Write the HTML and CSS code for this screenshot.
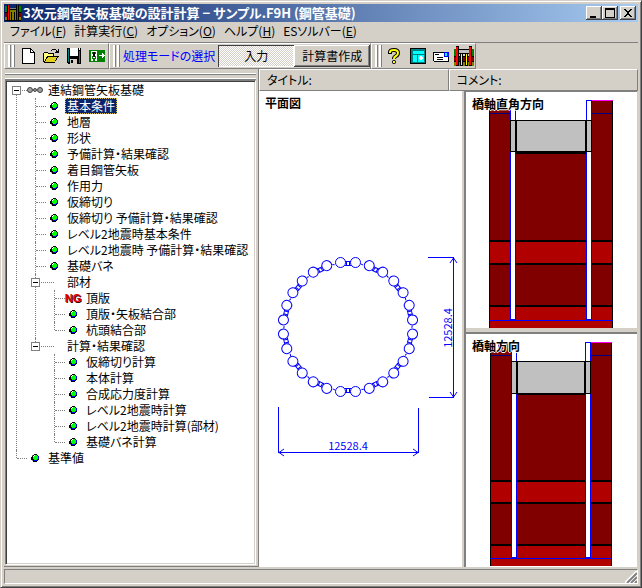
FILE: index.html
```html
<!DOCTYPE html>
<html lang="ja">
<head>
<meta charset="utf-8">
<title>3次元鋼管矢板基礎の設計計算</title>
<link rel="stylesheet" href="styles.css">
</head>
<body>
<svg class="defs" aria-hidden="true">
  <defs>
    <g id="ball" shape-rendering="crispEdges">
      <path fill="#000" d="M3 0h3v1h1v1h1v4h-1v1h-1v1h-4v-1h-1v-1h-1v-3h1v-2h2z"/>
      <path fill="#00f" d="M3 6h3v-1h1v-3h1v3h-1v1h-1v1h-3z"/>
      <path fill="#0f0" d="M3 1h3v1h1v3h-1v1h-3v-1h-1v-3h1z"/>
      <path fill="#fff" d="M2 2h1v-1h1v1h-1v1h-1z"/>
      <path fill="#808080" d="M1 1h1v1h-1zM1 6h1v1h-1z"/>
    </g>
  </defs>
</svg>
<div class="window">
  <header class="titlebar">
    <svg class="title-icon" viewBox="0 0 16 16" shape-rendering="crispEdges" aria-hidden="true">
      <path fill="#008000" d="M0 1h2v6h-2zM14 1h2v6h-2z"/><path fill="#800000" d="M0 8h16v4h-16z"/><path fill="#808000" d="M0 12h16v3h-16zM4 5h8v10h-8z"/>
      <path d="M2 0h3v16h-3zM11 0h3v16h-3zM5 4h6v1h-6zM6 7h1v8h-1zM9 7h1v8h-1zM0 7h2v1h-2zM14 7h2v1h-2zM0 15h16v1h-16z"/>
      <path fill="#f00" d="M3 0h1v15h-1zM12 0h1v15h-1z"/><path fill="#808080" d="M5 3h6v1h-6z"/>
    </svg>
    <h1>3次元鋼管矢板基礎の設計計算 − サンプル.F9H (鋼管基礎)</h1>
    <button class="caption" aria-label="最小化"><svg viewBox="0 0 12 10"><path d="M2 8h6v2h-6z"/></svg></button>
    <button class="caption" aria-label="最大化"><svg viewBox="0 0 12 10"><path fill-rule="evenodd" d="M1 0h10v10h-10zM2 2v7h8v-7z"/></svg></button>
    <button class="caption close" aria-label="閉じる"><svg viewBox="0 0 12 10"><path d="M2 1h2v1h1v1h2v-1h1v-1h2v1h-1v1h-1v1h-1v2h1v1h1v1h1v1h-2v-1h-1v-1h-2v1h-1v1h-2v-1h1v-1h1v-1h1v-2h-1v-1h-1v-1h-1z"/></svg></button>
  </header>

  <nav class="menu">
    <button>ファイル(<u>F</u>)</button>
    <button>計算実行(<u>C</u>)</button>
    <button>オプション(<u>O</u>)</button>
    <button>ヘルプ(<u>H</u>)</button>
    <button>ESソルバー(<u>E</u>)</button>
  </nav>

  <div class="toolbars">
    <div class="band">
      <span class="grip"></span>
      <button class="tool" aria-label="新規"><svg viewBox="0 0 16 16" shape-rendering="crispEdges"><path d="M2 0h9v1h1v1h1v1h1v1h1v12h-13z"/><path fill="#fff" d="M3 1h7v4h4v10h-11z"/><path fill="#fff" d="M11 2h1v1h1v1h-2z"/></svg></button>
      <button class="tool" aria-label="開く"><svg viewBox="0 0 16 16" shape-rendering="crispEdges"><path d="M0 5h1v-1h4v1h6v3h5v1h-1v1h-1v2h-1v1h-1v2h-11v-1h-1zM9 1h4v1h-4zM8 2h1v1h-1zM13 2h1v1h1v-2h1v4h-4v-1h1v-1h0z"/><path fill="#ffff80" d="M1 5h4v1h5v2h-6v1h-1v2h-1v2h-1z"/><path fill="#e0d020" d="M5 9h9v1h-1v2h-1v2h-10v-1h1v-2h1v-1h1z"/></svg></button>
      <button class="tool" aria-label="保存"><svg viewBox="0 0 16 16" shape-rendering="crispEdges"><path d="M1 0h14v16h-13v-1h-1z"/><path fill="#008080" d="M2 1h1v13h-1zM13 3h1v12h-1z"/><path fill="#fff" d="M4 0h8v8h-8zM13 0h1v2h-1z"/><path fill="#d4d0c8" d="M4 11h7v5h-7z"/><path d="M5 12h2v3h-2z"/></svg></button>
      <button class="tool" aria-label="終了"><svg viewBox="0 0 16 16" shape-rendering="crispEdges"><path fill="#008000" d="M0 2h16v12h-16z"/><path fill="#fff" d="M2 3h6v10h-6z"/><path fill="#008000" d="M3 4h1v2h-1zM6 4h1v2h-1zM3 8h1v3h-1zM6 8h1v3h-1zM4 10h2v3h-2z"/><path d="M4 4h2v2h-2zM4 6h2v3h-2z"/><path fill="#fff" d="M10 7h3v-2h1v1h1v1h1v1h-1v1h-1v1h-1v-2h-3z"/></svg></button>
    </div>
    <div class="band">
      <span class="grip"></span>
      <span class="mode-label">処理モードの選択</span>
      <button class="mode pressed" aria-pressed="true">入力</button>
      <button class="mode" aria-pressed="false">計算書作成</button>
    </div>
    <div class="band">
      <span class="grip"></span>
      <button class="tool" aria-label="ヘルプ"><svg viewBox="0 0 16 16"><path fill="none" stroke="#000" stroke-width="4" d="M3 6v-2q0-2 4-2t4 3q0 2-2 3t-2 3"/><path fill="none" stroke="#ff0" stroke-width="2" d="M3 5v-1q0-2 4-2t4 3q0 2-2 3t-2 3"/><circle cx="7" cy="14" r="2"/><path fill="#ff0" d="M6 13h2v2h-2z"/></svg></button>
      <button class="tool" aria-label="画面"><svg viewBox="0 0 16 16" shape-rendering="crispEdges"><path d="M0 0h16v16h-16z"/><path fill="#008080" d="M1 1h14v14h-14z"/><path fill="#0ff" d="M3 3h11v3h-11zM3 7h4v7h-4zM8 7h6v7h-6z"/><path fill="#fff" d="M10 8h2v1h1v2h-1v1h-2v-1h-1v-2h1z"/></svg></button>
      <button class="tool" aria-label="メール"><svg viewBox="0 0 16 16" shape-rendering="crispEdges"><path d="M0 4h16v10h-15v-1h-1z"/><path fill="#fff" d="M1 5h14v8h-14z"/><path d="M2 6h4v1h-4zM4 9h6v1h-6zM4 11h6v1h-6z"/><path fill="#00f" d="M11 4h5v5h-5z"/><path fill="#0ff" d="M12 5h2v3h-2z"/></svg></button>
      <button class="tool" aria-label="基礎"><svg class="large" viewBox="0 0 20 20" shape-rendering="crispEdges">
        <path fill="#008000" d="M0 3h2v7h-2zM18 3h2v7h-2z"/><path fill="#800000" d="M0 11h20v4h-20z"/><path fill="#808000" d="M0 16h20v4h-20z"/>
        <path d="M0 10h20v1h-20zM0 15h20v1h-20zM2 0h3v20h-3zM15 0h3v20h-3zM5 3h10v1h-10zM5 7h10v1h-10zM6 8h3v12h-3zM11 8h3v12h-3z"/>
        <path fill="#c0c0c0" d="M5 4h10v3h-10z"/><path fill="#f00" d="M2 1h2v18h-2zM15 1h2v18h-2z"/><path fill="#ff0" d="M7 8h1v11h-1zM12 8h1v11h-1z"/>
      </svg></button>
    </div>
  </div>

  <main class="body">
    <aside class="side">
      <div class="side-grip"></div>
      <div class="tree-box">
        <ul class="tree">
          <li class="root">
            <div class="row"><button class="exp" aria-label="折りたたむ"></button><span class="icon"><svg viewBox="0 0 16 8" class="chain"><circle cx="3" cy="4" r="2.5"/><circle cx="8" cy="4" r="1.5"/><circle cx="13" cy="4" r="2.5"/></svg></span><a href="#">連結鋼管矢板基礎</a></div>
            <ul>
              <li><div class="row"><span class="icon"><svg viewBox="0 0 8 8"><use href="#ball"/></svg></span><a href="#" class="selected">基本条件</a></div></li>
              <li><div class="row"><span class="icon"><svg viewBox="0 0 8 8"><use href="#ball"/></svg></span><a href="#">地層</a></div></li>
              <li><div class="row"><span class="icon"><svg viewBox="0 0 8 8"><use href="#ball"/></svg></span><a href="#">形状</a></div></li>
              <li><div class="row"><span class="icon"><svg viewBox="0 0 8 8"><use href="#ball"/></svg></span><a href="#">予備計算・結果確認</a></div></li>
              <li><div class="row"><span class="icon"><svg viewBox="0 0 8 8"><use href="#ball"/></svg></span><a href="#">着目鋼管矢板</a></div></li>
              <li><div class="row"><span class="icon"><svg viewBox="0 0 8 8"><use href="#ball"/></svg></span><a href="#">作用力</a></div></li>
              <li><div class="row"><span class="icon"><svg viewBox="0 0 8 8"><use href="#ball"/></svg></span><a href="#">仮締切り</a></div></li>
              <li><div class="row"><span class="icon"><svg viewBox="0 0 8 8"><use href="#ball"/></svg></span><a href="#">仮締切り 予備計算・結果確認</a></div></li>
              <li><div class="row"><span class="icon"><svg viewBox="0 0 8 8"><use href="#ball"/></svg></span><a href="#">レベル2地震時基本条件</a></div></li>
              <li><div class="row"><span class="icon"><svg viewBox="0 0 8 8"><use href="#ball"/></svg></span><a href="#">レベル2地震時 予備計算・結果確認</a></div></li>
              <li><div class="row"><span class="icon"><svg viewBox="0 0 8 8"><use href="#ball"/></svg></span><a href="#">基礎バネ</a></div></li>
              <li class="branch"><div class="row"><button class="exp" aria-label="折りたたむ"></button><span class="icon"></span><a href="#">部材</a></div>
                <ul>
                  <li><div class="row"><span class="icon ng">NG</span><a href="#">頂版</a></div></li>
                  <li><div class="row"><span class="icon"><svg viewBox="0 0 8 8"><use href="#ball"/></svg></span><a href="#">頂版・矢板結合部</a></div></li>
                  <li><div class="row"><span class="icon"><svg viewBox="0 0 8 8"><use href="#ball"/></svg></span><a href="#">杭頭結合部</a></div></li>
                </ul>
              </li>
              <li class="branch"><div class="row"><button class="exp" aria-label="折りたたむ"></button><span class="icon"></span><a href="#">計算・結果確認</a></div>
                <ul>
                  <li><div class="row"><span class="icon"><svg viewBox="0 0 8 8"><use href="#ball"/></svg></span><a href="#">仮締切り計算</a></div></li>
                  <li><div class="row"><span class="icon"><svg viewBox="0 0 8 8"><use href="#ball"/></svg></span><a href="#">本体計算</a></div></li>
                  <li><div class="row"><span class="icon"><svg viewBox="0 0 8 8"><use href="#ball"/></svg></span><a href="#">合成応力度計算</a></div></li>
                  <li><div class="row"><span class="icon"><svg viewBox="0 0 8 8"><use href="#ball"/></svg></span><a href="#">レベル2地震時計算</a></div></li>
                  <li><div class="row"><span class="icon"><svg viewBox="0 0 8 8"><use href="#ball"/></svg></span><a href="#">レベル2地震時計算(部材)</a></div></li>
                  <li><div class="row"><span class="icon"><svg viewBox="0 0 8 8"><use href="#ball"/></svg></span><a href="#">基礎バネ計算</a></div></li>
                </ul>
              </li>
            </ul>
          </li>
          <li><div class="row"><span class="icon"><svg viewBox="0 0 8 8"><use href="#ball"/></svg></span><a href="#">基準値</a></div></li>
        </ul>
      </div>
    </aside>

    <section class="content">
      <div class="heads"><div>タイトル:</div><div>コメント:</div></div>
      <div class="views">
        <section class="view plan">
          <h2>平面図</h2>
          <svg viewBox="259 91 203 476" aria-label="平面図">
            <defs>
              <g id="pair">
                <circle cx="340.5" cy="262.5" r="5"/><circle cx="355.5" cy="262.5" r="5"/>
                <path d="M345 261.5h6M345 265.5h6M346.500 261v5M349.500 261v5M361 264l2 1"/>
              </g>
            </defs>
            <g class="ring">
              <use href="#pair"/>
              <use href="#pair" transform="rotate(25.714 348 327)"/>
              <use href="#pair" transform="rotate(51.429 348 327)"/>
              <use href="#pair" transform="rotate(77.143 348 327)"/>
              <use href="#pair" transform="rotate(102.857 348 327)"/>
              <use href="#pair" transform="rotate(128.571 348 327)"/>
              <use href="#pair" transform="rotate(154.286 348 327)"/>
              <use href="#pair" transform="rotate(180 348 327)"/>
              <use href="#pair" transform="rotate(205.714 348 327)"/>
              <use href="#pair" transform="rotate(231.429 348 327)"/>
              <use href="#pair" transform="rotate(257.143 348 327)"/>
              <use href="#pair" transform="rotate(282.857 348 327)"/>
              <use href="#pair" transform="rotate(308.571 348 327)"/>
              <use href="#pair" transform="rotate(334.286 348 327)"/>
            </g>
            <path class="dim" d="M278.500 407v46M418.500 408v45M278 452.500h141M284 449l-5 3.500l5 3.500M413 449l5 3.500l-5 3.500M428 257.500h26M429 397.500h25M453.500 257v141M450 263l3.500-5l3.500 5M450 392l3.500 5l3.500-5"/>
            <text x="348" y="450" text-anchor="middle">12528.4</text>
            <text transform="translate(452 328) rotate(-90)" text-anchor="middle">12528.4</text>
          </svg>
        </section>
        <div class="sections">
          <section class="view upper">
            <h2>橋軸直角方向</h2>
            <svg viewBox="466 92 171 236" shape-rendering="crispEdges" aria-label="橋軸直角方向">
              <path fill="#800000" d="M489 110h21v218h-21zM516 152h71v176h-71zM592 100h21v228h-21z"/>
              <path fill="#b00000" d="M489 241h124v22h-124zM489 306h124v22h-124z"/>
              <path d="M489 240h124v2h-124zM489 263h124v2h-124zM489 305h124v2h-124zM489 110h1v218h-1zM612 101h1v227h-1z"/>
              <path fill="#f0f" d="M592 100h21v1h-21z"/><path fill="#000080" d="M490 113h20v1h-20zM592 113h20v1h-20z"/>
              <path fill="#00f" d="M510 110h6v210h-6zM586 100h6v220h-6zM489 320h124v1h-124z"/>
              <path fill="#fff" d="M511 110h4v209h-4zM587 101h4v218h-4z"/>
              <path d="M510 120h82v32h-82zM516 151h70v3h-70z"/>
              <path fill="#c0c0c0" d="M511 121h4v30h-4zM517 121h68v30h-68zM587 121h4v30h-4z"/>
            </svg>
          </section>
          <section class="view lower">
            <h2>橋軸方向</h2>
            <svg viewBox="466 334 171 233" shape-rendering="crispEdges" aria-label="橋軸方向">
              <path fill="#800000" d="M490 351h21v215h-21zM498 343h13v9h-13zM517 394h68v172h-68zM591 343h21v223h-21z"/>
              <path fill="#b00000" d="M490 481h122v21h-122zM490 545h122v21h-122z"/>
              <path d="M490 480h122v2h-122zM490 502h122v2h-122zM490 544h122v2h-122zM490 351h1v215h-1zM611 343h1v223h-1z"/>
              <path fill="#f0f" d="M591 342h21v1h-21zM498 342h8v1h-8z"/><path fill="#000080" d="M491 355h20v1h-20zM591 355h20v1h-20z"/>
              <path fill="#00f" d="M511 342h6v216h-6zM585 342h6v216h-6zM490 558h122v1h-122z"/>
              <path fill="#fff" d="M512 343h4v214h-4zM586 343h4v214h-4z"/>
              <path d="M511 361h80v33h-80zM517 393h68v2h-68z"/>
              <path fill="#c0c0c0" d="M512 362h4v31h-4zM518 362h66v31h-66zM586 362h4v31h-4z"/>
            </svg>
          </section>
        </div>
      </div>
    </section>
  </main>

  <footer class="status">
    <svg viewBox="0 0 12 12" aria-hidden="true"><path stroke="#fff" stroke-width="2" d="M0 12l12-12M4 12l8-8M8 12l4-4"/><path stroke="#808080" stroke-width="2" d="M2 12l10-10M6 12l6-6M10 12l2-2"/></svg>
  </footer>
</div>
</body>
</html>
```

FILE: styles.css
```css
* { box-sizing: border-box; }

body {
  margin: 0;
  background: #d4d0c8;
  color: #000;
  font: 12px/16px "Noto Sans CJK JP", "Liberation Sans", sans-serif;
  font-feature-settings: "palt";
}

button {
  margin: 0;
  padding: 0;
  border: 0;
  background: #d4d0c8;
  color: inherit;
  font: inherit;
  font-feature-settings: inherit;
}

h1, h2 { margin: 0; font-size: 12px; line-height: 16px; white-space: nowrap; }
a { color: inherit; text-decoration: none; }
svg { display: block; }
.defs { position: absolute; width: 0; height: 0; }

.window {
  display: flex;
  flex-direction: column;
  height: 100vh;
  padding: 3px;
  border: 1px solid;
  border-color: #d4d0c8 #404040 #404040 #d4d0c8;
  box-shadow: inset 1px 1px #fff, inset -1px -1px #808080;
}

.titlebar {
  display: flex;
  flex: none;
  align-items: center;
  height: 18px;
  padding: 0 2px 0 1px;
  background: linear-gradient(90deg, #0a246a, #a6caf0);
  color: #fff;
}
.title-icon { width: 16px; height: 16px; margin-right: 2px; }
.titlebar h1 { flex: 1; font-size: 13px; }
.caption {
  display: grid;
  place-items: center;
  width: 16px;
  height: 14px;
  box-shadow: inset -1px -1px #404040, inset 1px 1px #fff, inset -2px -2px #808080;
}
.caption svg { width: 12px; height: 10px; shape-rendering: crispEdges; }
.close { margin-left: 2px; }

.menu { display: flex; flex: none; height: 21px; padding: 0 0 3px 2px; border-bottom: 1px solid #808080; }
.menu button { padding: 0 4px; }

.toolbars { display: flex; flex: none; height: 26px; }
.band {
  display: flex;
  align-items: center;
  border: 1px solid;
  border-color: #fff #808080 #808080 #fff;
}
.grip {
  width: 6px;
  height: 22px;
  margin: 0 2px 0 3px;
  border: solid #fff;
  border-width: 0 2px;
  box-shadow: 1px 0 #808080, inset -1px 0 #d4d0c8, inset 1px 0 #808080;
}
.tool { display: grid; place-items: center; width: 23px; height: 22px; }
.tool svg { width: 16px; height: 16px; }
.tool .large { width: 20px; height: 20px; }
.mode-label { padding: 0 3px 0 2px; color: #00f; }
.mode {
  width: 76px;
  height: 22px;
  box-shadow: inset -1px -1px #404040, inset 1px 1px #fff, inset -2px -2px #808080;
}
.pressed {
  background: repeating-conic-gradient(#fff 0 25%, #d4d0c8 0 50%) 0 0 / 2px 2px;
  box-shadow: inset 1px 1px #404040, inset -1px -1px #fff;
}

.body { display: flex; flex: 1; min-height: 0; }
.side {
  display: flex;
  flex: none;
  flex-direction: column;
  width: 255px;
  padding: 4px 2px 1px 1px;
  border: solid #808080;
  border-width: 0 1px 1px 0;
}
.side-grip {
  flex: none;
  height: 6px;
  margin-bottom: 1px;
  border: solid #fff;
  border-width: 1px 0;
  box-shadow: 0 1px #808080, inset 0 1px #808080;
}
.tree-box {
  flex: 1;
  min-height: 0;
  overflow: hidden;
  border: 1px solid;
  border-color: #808080 #fff #fff #808080;
  background: #fff;
  box-shadow: inset 1px 1px #404040, inset -1px -1px #d4d0c8;
}

.tree, .tree ul { margin: 0; padding: 0; list-style: none; }
.tree { padding: 1px; }
.tree ul { margin-left: 19px; }
.tree li { position: relative; }
.tree li::before {
  content: "";
  position: absolute;
  top: 0;
  bottom: 0;
  left: 9px;
  border-left: 1px dotted #808080;
}
.tree li:last-child::before { bottom: auto; height: 8px; }
.tree .root::before { top: 8px; }
.row { position: relative; display: flex; align-items: center; height: 16px; padding-left: 19px; white-space: nowrap; }
.row::before {
  content: "";
  position: absolute;
  top: 8px;
  left: 10px;
  width: 10px;
  border-top: 1px dotted #808080;
}
.branch > .row::before { width: 18px; }
.exp {
  position: absolute;
  top: 4px;
  left: 5px;
  width: 9px;
  height: 9px;
  border: 1px solid #808080;
  background: linear-gradient(#000, #000) 1px 3px / 5px 1px no-repeat #fff;
}
.icon { display: grid; place-items: center; width: 19px; height: 16px; padding-right: 1px; }
.icon svg { width: 8px; height: 8px; }
.icon .chain { width: 16px; fill: #a0a0a0; stroke: #404040; }
.ng { color: #e00000; font: bold 11px/16px "Liberation Sans", sans-serif; text-shadow: 1px 1px #400000; }
.row a { height: 16px; margin-left: 1px; padding: 0 2px; }
.row .selected { background: #0a246a; color: #fff; outline: 1px dotted #e0c040; outline-offset: -1px; }

.content { display: flex; flex: 1; flex-direction: column; min-width: 0; }
.heads { display: flex; flex: none; height: 22px; }
.heads div {
  flex: 1;
  padding: 2px 7px;
  border: 1px solid;
  border-color: #fff #808080 #808080 #fff;
}
.views { display: flex; flex: 1; min-height: 0; padding-right: 1px; }
.view { position: relative; min-width: 0; min-height: 0; background: #fff; }
.view > svg { width: 100%; height: 100%; }
.view h2 {
  position: absolute;
  top: 4px;
  left: 6px;
  text-shadow: 1px 0 #fff, -1px 0 #fff, 0 1px #fff, 0 -1px #fff;
}
.plan { flex: 203 1 0; }
.sections {
  display: flex;
  flex: 171 1 0;
  flex-direction: column;
  min-width: 0;
  margin-left: 2px;
  border: solid #808080;
  border-width: 1px 0 0 2px;
}
.upper { flex: 236 1 0; }
.lower { flex: 233 1 0; margin-top: 4px; border-top: 2px solid #808080; }
.ring, .dim { fill: none; stroke: #00f; stroke-width: 1px; }
.plan text { fill: #00f; font-size: 11px; }

.status {
  display: flex;
  flex: none;
  align-items: flex-end;
  justify-content: flex-end;
  height: 15px;
  margin-top: 2px;
  border: 1px solid;
  border-color: #808080 #fff #fff #808080;
}
.status svg { width: 12px; height: 12px; }
```
